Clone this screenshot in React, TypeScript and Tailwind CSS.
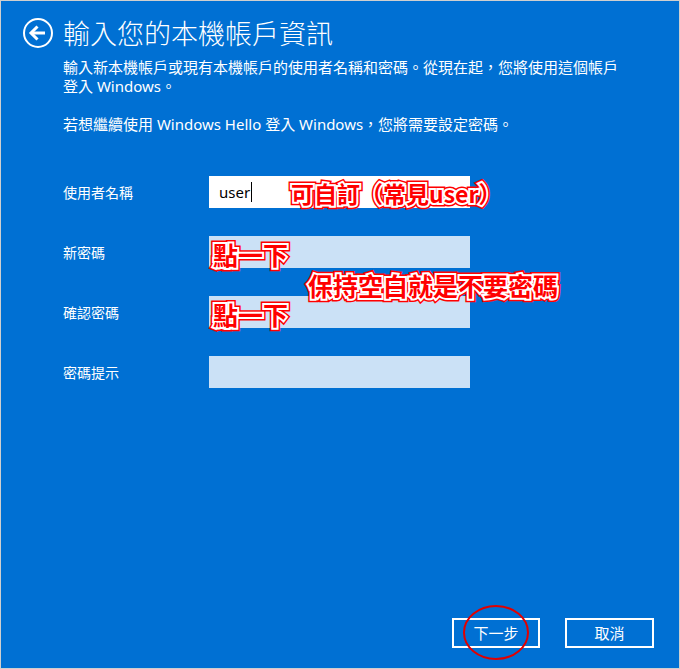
import React from "react";

const FONT = '"Noto Sans", "Noto Sans CJK TC", sans-serif';
const CJK = '"Noto Sans CJK TC", sans-serif';

function Note({
  text,
  size,
  left,
  top,
}: {
  text: string;
  size: number;
  left: number;
  top: number;
}) {
  const base: React.CSSProperties = {
    fontSize: size,
    lineHeight: 1,
    fontFamily: CJK,
    fontWeight: 700,
    whiteSpace: "nowrap",
  };
  return (
    <div className="absolute" style={{ left, top }}>
      <span
        className="absolute left-0 top-0 text-[#ff0000] [-webkit-text-stroke:7px_#ff0000]"
        style={base}
      >
        {text}
      </span>
      <span
        className="absolute left-0 top-0 text-white [-webkit-text-stroke:4px_#ffffff]"
        style={base}
      >
        {text}
      </span>
      <span className="relative text-[#ff0000]" style={base}>
        {text}
      </span>
    </div>
  );
}

export default function App() {
  const rows = [
    { label: "使用者名稱", value: "user", active: true },
    { label: "新密碼" },
    { label: "確認密碼" },
    { label: "密碼提示" },
  ];
  return (
    <div
      className="relative flex h-[669px] w-[680px] flex-col border border-[#cfcfcf] bg-[#0070d3] text-white"
      style={{ fontFamily: FONT }}
    >
      <div className="flex items-center gap-[9px] pl-[21px] pt-[14px]">
        <svg width="32" height="32" viewBox="0 0 32 32" className="shrink-0">
          <circle cx="16" cy="16" r="14" fill="none" stroke="white" strokeWidth="2" />
          <path d="M9 16 H23" stroke="white" strokeWidth="3" strokeLinecap="butt" />
          <path d="M15.5 9.5 L9 16 L15.5 22.5" fill="none" stroke="white" strokeWidth="3" strokeLinejoin="miter" />
        </svg>
        <div className="text-[27px] leading-[36px] font-light" style={{ fontFamily: CJK }}>
          輸入您的本機帳戶資訊
        </div>
      </div>

      <div className="pl-[62px] pt-[7px] text-[15px] leading-[19px]">
        <p className="w-[580px]">
          輸入新本機帳戶或現有本機帳戶的使用者名稱和密碼。從現在起，您將使用這個帳戶
          <br />
          登入 Windows。
        </p>
        <p className="mt-[19px]">若想繼續使用 Windows Hello 登入 Windows，您將需要設定密碼。</p>
      </div>

      <div className="flex flex-col gap-[28px] pl-[62px] pt-[42px]">
        {rows.map((r) => (
          <div key={r.label} className="flex items-center">
            <div className="w-[146px] text-[14px]" style={{ fontFamily: CJK }}>
              {r.label}
            </div>
            <div
              className={
                r.active
                  ? "flex h-[32px] w-[261px] items-center bg-white pl-[10px] text-[15px] text-black"
                  : "h-[32px] w-[261px] bg-[#cbe1f6]"
              }
            >
              {r.value && (
                <>
                  <span>{r.value}</span>
                  <span className="ml-[1px] h-[20px] w-px bg-black" />
                </>
              )}
            </div>
          </div>
        ))}
      </div>

      <div className="flex-1" />

      <div className="flex justify-end gap-[25px] pb-[20px] pr-[25px]">
        <div
          className="flex h-[30px] w-[88px] items-center justify-center border-2 border-white text-[15px]"
          style={{ fontFamily: CJK }}
        >
          下一步
        </div>
        <div
          className="flex h-[30px] w-[89px] items-center justify-center border-2 border-white text-[15px]"
          style={{ fontFamily: CJK }}
        >
          取消
        </div>
      </div>

      <Note text="可自訂（常見user）" size={23} left={290} top={181} />
      <Note text="點一下" size={25} left={212} top={241} />
      <Note text="保持空白就是不要密碼" size={25} left={307} top={272} />
      <Note text="點一下" size={25} left={212} top={301} />

      <svg
        className="pointer-events-none absolute"
        style={{ left: 461, top: 603 }}
        width="68"
        height="57"
        viewBox="0 0 68 57"
      >
        <ellipse cx="34" cy="28.5" rx="32" ry="26.5" fill="none" stroke="#e00000" strokeWidth="2" />
      </svg>
    </div>
  );
}
